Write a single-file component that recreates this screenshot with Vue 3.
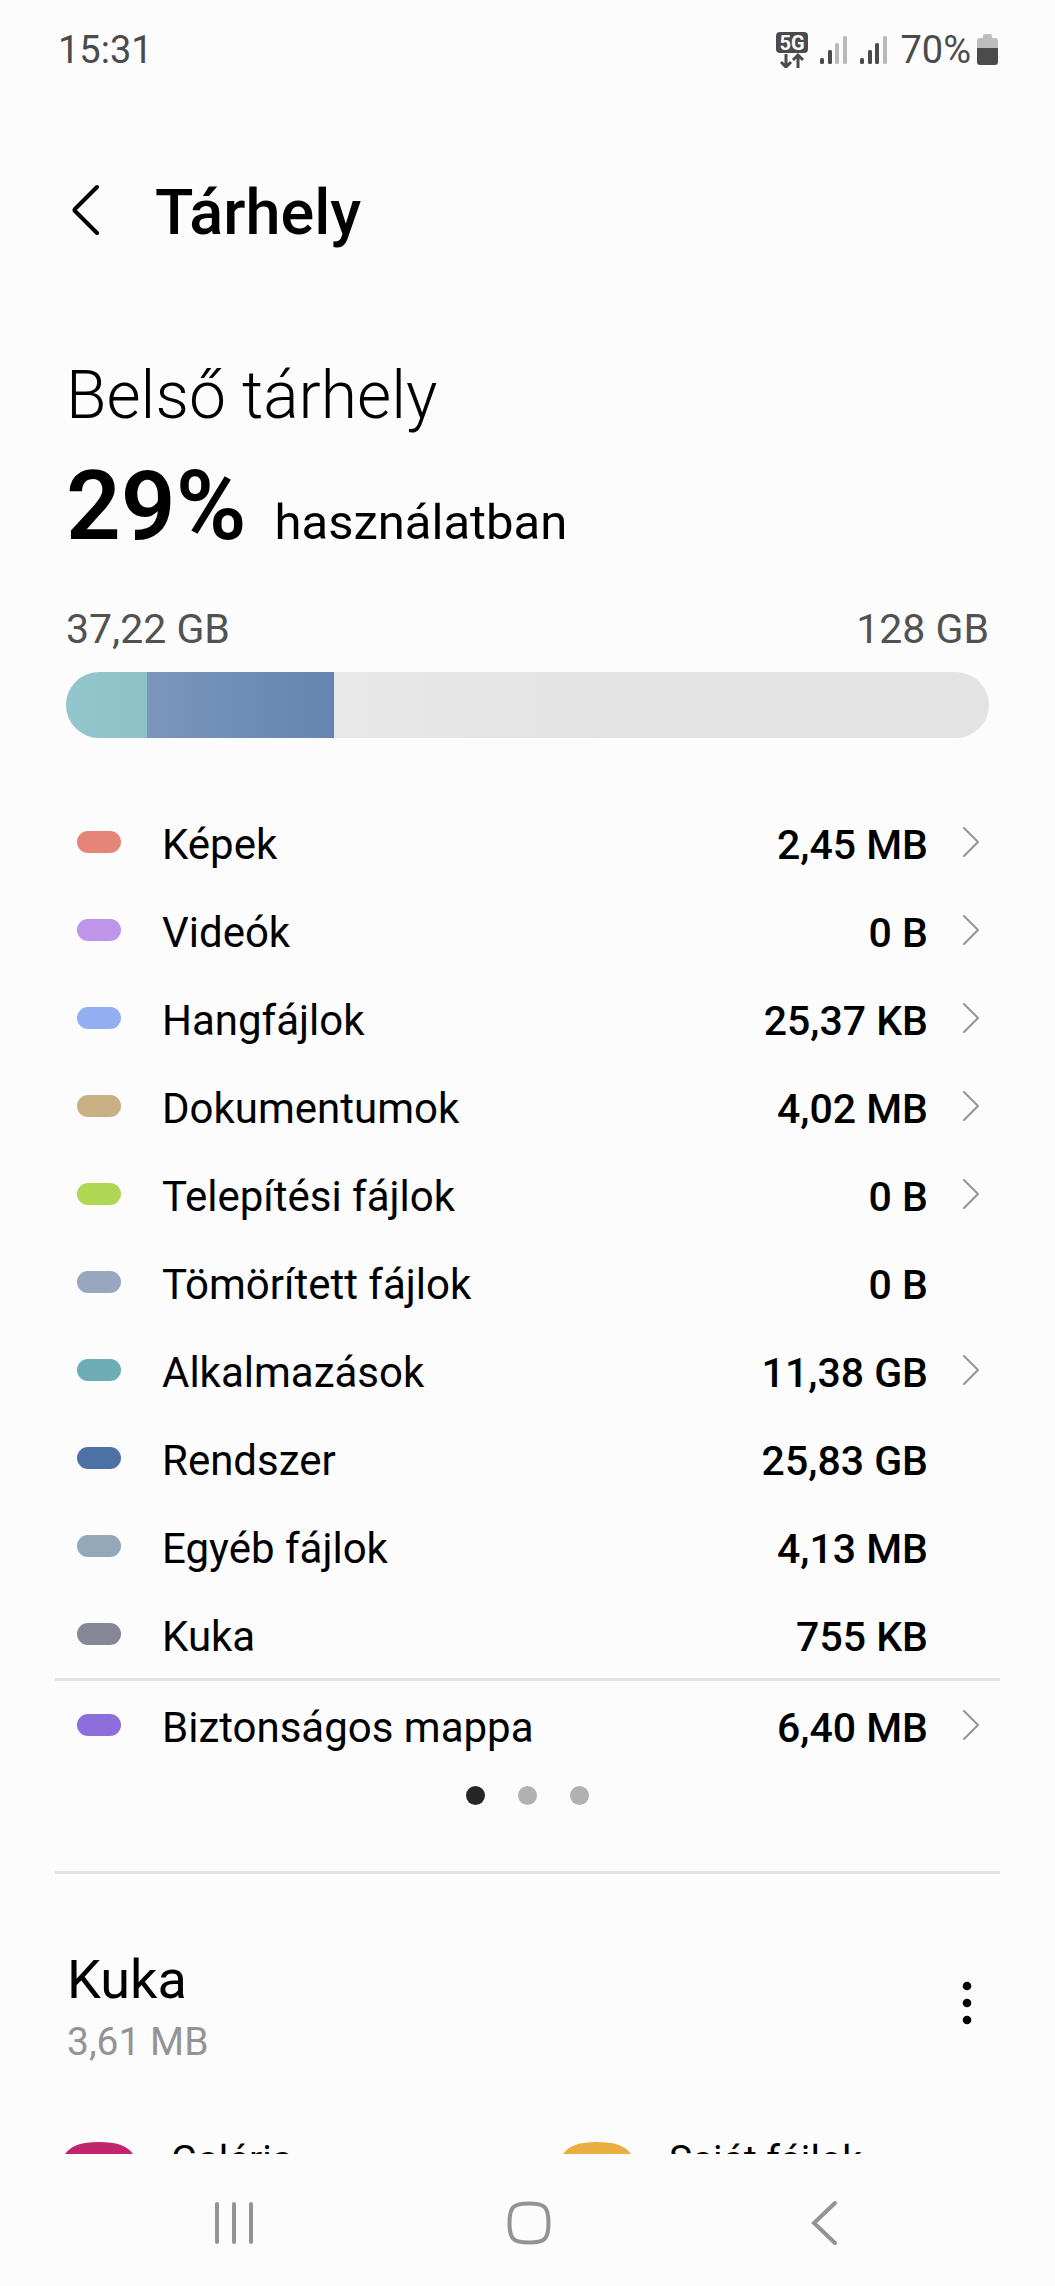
<script setup>
const total = 128

const segments = [
  { name: 'Alkalmazások', size: 11.3, from: '#93c6cf', to: '#8dc1c4' },
  { name: 'Rendszer', size: 25.8, from: '#7b96be', to: '#6484b1' },
]

const categories = [
  { name: 'Képek', size: '2,45 MB', color: '#e48578', link: true },
  { name: 'Videók', size: '0 B', color: '#bf95e9', link: true },
  { name: 'Hangfájlok', size: '25,37 KB', color: '#93aff2', link: true },
  { name: 'Dokumentumok', size: '4,02 MB', color: '#c9b084', link: true },
  { name: 'Telepítési fájlok', size: '0 B', color: '#b0d753', link: true },
  { name: 'Tömörített fájlok', size: '0 B', color: '#98a6bf', link: false },
  { name: 'Alkalmazások', size: '11,38 GB', color: '#6eacb6', link: true },
  { name: 'Rendszer', size: '25,83 GB', color: '#4d71a5', link: false },
  { name: 'Egyéb fájlok', size: '4,13 MB', color: '#93a8b8', link: false },
  { name: 'Kuka', size: '755 KB', color: '#868796', link: false },
  { name: 'Biztonságos mappa', size: '6,40 MB', color: '#8d6edb', link: true, divided: true },
]

const trashApps = [
  { name: 'Galéria', color: '#c2256d' },
  { name: 'Saját fájlok', color: '#eaad40' },
]

const signals = [2, 3]
const bars = [
  { x: 0, y: 22 },
  { x: 8, y: 14 },
  { x: 15, y: 7 },
  { x: 23, y: 0 },
]
</script>

<template>
  <div class="screen">
    <div class="status">
      <span class="clock">15:31</span>
      <div class="indicators">
        <svg class="network" width="32" height="36" viewBox="0 0 32 36" role="img" aria-label="5G">
          <rect width="32" height="21" rx="4" fill="#4b4b4b" />
          <text x="16" y="18" text-anchor="middle" class="network-label">5G</text>
          <path d="M10 22v13M5 30l5 5 5-5M22 36V23M17 28l5-5 5 5" fill="none" stroke="#4b4b4b" stroke-width="3" />
        </svg>
        <svg v-for="level in signals" :key="level" class="signal" width="27" height="28" viewBox="0 0 27 28" aria-hidden="true">
          <rect
            v-for="(bar, i) in bars"
            :key="i"
            :x="bar.x"
            :y="bar.y"
            width="4"
            :height="28 - bar.y"
            rx="1.5"
            :fill="i < level ? '#4b4b4b' : '#b9b9b9'"
          />
        </svg>
        <span class="percent">70%</span>
        <svg width="21" height="31" viewBox="0 0 21 31" aria-hidden="true">
          <path d="M6 4V2q0-2 2-2h5q2 0 2 2v2h3q3 0 3 3v7H0V7q0-3 3-3z" fill="#bdbdbd" />
          <path d="M0 14h21v14q0 3-3 3H3q-3 0-3-3z" fill="#4b4b4b" />
        </svg>
      </div>
    </div>

    <header class="titlebar">
      <button type="button" class="back" aria-label="Vissza">
        <svg width="28" height="52" viewBox="0 0 28 52" fill="none" stroke="#000" stroke-width="4" stroke-linecap="round" stroke-linejoin="round">
          <path d="M25 3L3 25q-1 1 0 2l22 22" />
        </svg>
      </button>
      <h1>Tárhely</h1>
    </header>

    <main>
      <section class="summary">
        <h2>Belső tárhely</h2>
        <p class="usage"><strong>29%</strong><span>használatban</span></p>
        <div class="amounts"><span>37,22 GB</span><span>128 GB</span></div>
        <div class="bar">
          <div
            v-for="s in segments"
            :key="s.name"
            :style="{ width: (s.size / total) * 100 + '%', background: `linear-gradient(90deg, ${s.from}, ${s.to})` }"
          ></div>
        </div>
      </section>

      <ul class="categories">
        <li v-for="c in categories" :key="c.name" :class="{ divided: c.divided }">
          <component :is="c.link ? 'button' : 'div'" :type="c.link ? 'button' : null" class="row">
            <span class="swatch" :style="{ background: c.color }"></span>
            <span class="name">{{ c.name }}</span>
            <span class="size">{{ c.size }}</span>
            <span class="arrow">
              <svg v-if="c.link" width="17" height="30" viewBox="0 0 17 30" fill="none" stroke="#959595" stroke-width="2" stroke-linecap="round" stroke-linejoin="round">
                <path d="M1 1l14 14L1 29" />
              </svg>
            </span>
          </component>
        </li>
      </ul>

      <div class="pager">
        <span class="active"></span>
        <span></span>
        <span></span>
      </div>

      <section class="trash">
        <div class="trash-head">
          <div>
            <h2>Kuka</h2>
            <p>3,61 MB</p>
          </div>
          <button type="button" class="more" aria-label="További lehetőségek">
            <svg width="10" height="44" viewBox="0 0 10 44">
              <circle cx="5" cy="5" r="4.3" />
              <circle cx="5" cy="22" r="4.3" />
              <circle cx="5" cy="39" r="4.3" />
            </svg>
          </button>
        </div>
        <ul class="apps">
          <li v-for="a in trashApps" :key="a.name">
            <svg width="80" height="80" viewBox="0 0 80 80" aria-hidden="true">
              <path d="M40 0C70 0 80 10 80 40S70 80 40 80 0 70 0 40 10 0 40 0z" :fill="a.color" />
            </svg>
            <span>{{ a.name }}</span>
          </li>
        </ul>
      </section>
    </main>

    <nav class="navbar">
      <button type="button" aria-label="Legutóbbiak">
        <svg width="44" height="44" viewBox="0 0 44 44" fill="none" stroke="#939393" stroke-width="4" stroke-linecap="round">
          <path d="M5 3v38M22 3v38M39 3v38" />
        </svg>
      </button>
      <button type="button" aria-label="Kezdőképernyő">
        <svg width="44" height="44" viewBox="0 0 44 44" fill="none" stroke="#939393" stroke-width="4">
          <path d="M22 2.500C38 2.500 41.500 6 41.500 22S38 41.500 22 41.500 2.500 38 2.500 22 6 2.500 22 2.500z" />
        </svg>
      </button>
      <button type="button" aria-label="Vissza">
        <svg width="28" height="48" viewBox="0 0 28 48" fill="none" stroke="#939393" stroke-width="4" stroke-linecap="round">
          <path d="M25 4L4 24l21 20" />
        </svg>
      </button>
    </nav>
  </div>
</template>

<style>
body {
  background: #fcfcfc;
}
</style>

<style scoped>
.screen {
  display: flex;
  flex-direction: column;
  height: 100vh;
  background: #fcfcfc;
  color: #000;
  font-family: Roboto, 'Noto Sans', sans-serif;
}

h1,
h2,
p,
ul {
  margin: 0;
  padding: 0;
  font-weight: 400;
  list-style: none;
}

button {
  padding: 0;
  border: 0;
  background: none;
  color: inherit;
  font: inherit;
  text-align: left;
}

svg {
  display: block;
  flex: none;
}

.status {
  display: flex;
  flex: none;
  align-items: center;
  justify-content: space-between;
  height: 99px;
  padding: 0 57px 0 58px;
  color: #4b4b4b;
  font-size: 38px;
  line-height: 48px;
}

.indicators {
  display: flex;
  align-items: center;
}

.network {
  margin-right: 12px;
}

.network-label {
  fill: #fcfcfc;
  font-size: 20px;
  font-weight: 700;
}

.signal {
  margin-right: 13px;
}

.percent {
  margin-right: 6px;
}

.titlebar {
  display: flex;
  flex: none;
  align-items: center;
  height: 222px;
  padding: 0 72px;
}

.back {
  width: 83px;
}

h1 {
  padding-top: 6px;
  font-size: 63px;
  font-weight: 500;
  line-height: 76px;
}

main {
  flex: 1;
  min-height: 0;
  overflow: hidden;
}

.summary {
  padding: 35px 66px 0;
}

.summary h2 {
  font-size: 66px;
  font-weight: 300;
  line-height: 80px;
}

.usage {
  display: flex;
  align-items: baseline;
  gap: 28px;
  margin-top: 14px;
  font-size: 49px;
  line-height: 64px;
}

.usage strong {
  font-size: 96px;
  font-weight: 600;
  line-height: 112px;
}

.amounts {
  display: flex;
  justify-content: space-between;
  margin-top: 42px;
  color: #525252;
  font-size: 41px;
  line-height: 50px;
}

.bar {
  display: flex;
  height: 66px;
  margin-top: 18px;
  border-radius: 33px;
  overflow: hidden;
  background: linear-gradient(90deg, #e8e8e8 30%, #e3e3e3 60%);
}

.categories {
  margin: 60px 55px 0;
}

.divided {
  border-top: 3px solid #e2e2e2;
}

.row {
  display: flex;
  align-items: center;
  box-sizing: border-box;
  width: 100%;
  height: 88px;
  padding: 0 20px 0 22px;
  font-size: 42px;
  line-height: 50px;
}

.swatch {
  width: 44px;
  height: 22px;
  margin-right: 41px;
  border-radius: 11px;
}

.name,
.size {
  padding-top: 6px;
}

.name {
  flex: 1;
}

.size {
  font-size: 41px;
  font-weight: 500;
}

.arrow {
  width: 17px;
  margin-left: 35px;
}

.pager {
  display: flex;
  justify-content: center;
  gap: 33px;
  margin-top: 17px;
}

.pager span {
  width: 19px;
  height: 19px;
  border-radius: 50%;
  background: #b1b1b1;
}

.pager .active {
  background: #262626;
}

.trash {
  margin: 66px 55px 0;
  padding-top: 74px;
  border-top: 3px solid #e2e2e2;
}

.trash-head {
  display: flex;
  justify-content: space-between;
  padding: 0 28px 0 12px;
}

.trash h2 {
  font-size: 54px;
  line-height: 64px;
}

.trash p {
  margin-top: 6px;
  color: #949494;
  font-size: 39px;
  line-height: 48px;
}

.more {
  height: 110px;
}

.apps {
  display: grid;
  grid-template-columns: 1fr 1fr;
  margin: 70px -55px 0 4px;
}

.apps li {
  display: flex;
  gap: 32px;
  font-size: 39px;
  line-height: 48px;
}

.apps svg {
  margin-top: 6px;
}

.navbar {
  display: flex;
  flex: none;
  height: 132px;
  padding: 6px 84px 0 86px;
  box-sizing: border-box;
}

.navbar button {
  display: flex;
  flex: 1;
  align-items: center;
  justify-content: center;
}
</style>
